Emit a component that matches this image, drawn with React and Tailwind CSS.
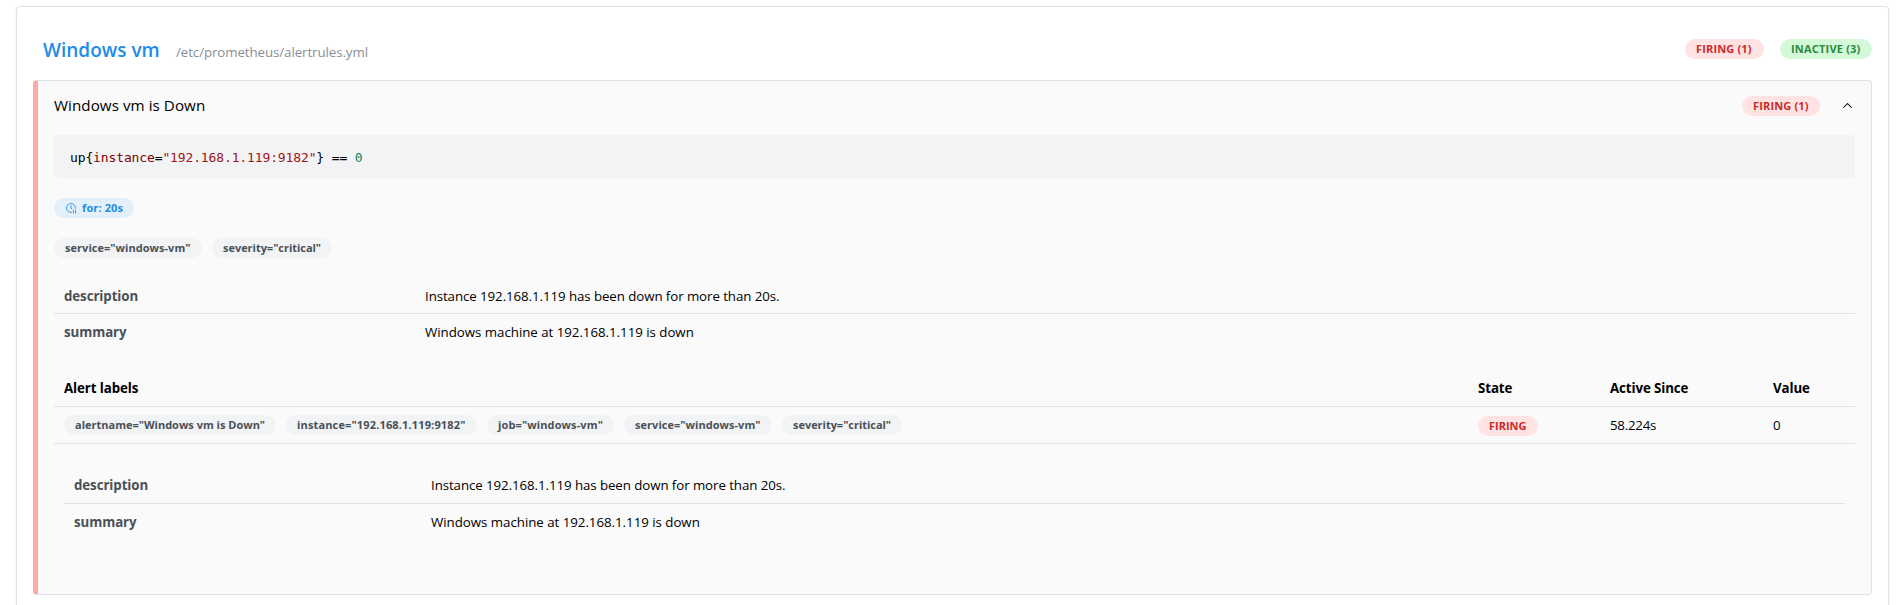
import React from "react";

const tones = {
  red: "bg-[#ffe3e3] text-[#c92a2a]",
  green: "bg-[#d3f9d8] text-[#2b8a3e]",
  blue: "bg-[#e4f0f9] text-[#228be6]",
  gray: "bg-[#f1f3f5] text-[#495057]",
};

function Badge({ tone, className, children }) {
  return (
    <span className={"flex h-5 shrink-0 items-center rounded-full pl-[11px] text-[11px] leading-5 font-bold whitespace-nowrap " + tones[tone] + " " + className}>
      {children}
    </span>
  );
}

function ClockPause() {
  return (
    <svg className="mr-[5px] size-3 opacity-85" viewBox="0 0 24 24" fill="none" stroke="currentColor" strokeWidth="2" strokeLinecap="round" strokeLinejoin="round">
      <path d="M20.942 13.018a9 9 0 1 0 -7.909 7.922" />
      <path d="M12 7v5l2 2" />
      <path d="M17 17v5" />
      <path d="M21 17v5" />
    </svg>
  );
}

function Annotations({ nested }) {
  const col = nested ? "w-[357px]" : "w-[361px]";
  const row = nested ? "h-[36px]" : "h-[35px]";
  return (
    <div className="text-[13.3px] leading-5 tracking-[-0.08px]">
      <div className={"flex items-center border-b border-[#dee2e6] box-content pl-2.5 " + row}>
        <div className={"shrink-0 font-bold text-[#495057] " + col}>description</div>
        <div>Instance 192.168.1.119 has been down for more than 20s.</div>
      </div>
      <div className={"flex items-center pl-2.5 " + row}>
        <div className={"shrink-0 font-bold text-[#495057] " + col}>summary</div>
        <div className="tracking-[-0.03px]">Windows machine at 192.168.1.119 is down</div>
      </div>
    </div>
  );
}

export default function App() {
  return (
    <div className="h-[605px] overflow-hidden bg-white pt-1.5 pr-[13px] pl-4 font-['Open_Sans','Noto_Sans',sans-serif] text-black">
      <div className="h-[640px] rounded border border-[#dee2e6] px-4 shadow-[0_1px_3px_rgba(0,0,0,0.05)]">
        <div className="flex h-[73px] items-start justify-between">
          <div className="flex items-baseline pt-[29px] pl-2.5">
            <div className="w-[133px] text-[19px] leading-7 font-semibold text-[#228be6]">Windows vm</div>
            <div className="text-[13.3px] leading-5 tracking-[-0.08px] text-[#868e96]">/etc/prometheus/alertrules.yml</div>
          </div>
          <div className="flex gap-4 pt-8">
            <Badge tone="red" className="w-[79px] tracking-[0.15px]">FIRING (1)</Badge>
            <Badge tone="green" className="w-[92px] tracking-[0.2px]">INACTIVE (3)</Badge>
          </div>
        </div>
        <div className="h-[515px] rounded border border-l-[5px] border-[#dee2e6] border-l-[#ffa8a8] bg-[#fafafa] pr-4 pl-4">
          <div className="flex h-[54px] items-start">
            <div className="flex-1 pt-3 text-[15.2px] leading-6 tracking-[0.05px]">Windows vm is Down</div>
            <Badge tone="red" className="mt-[15px] w-[78px] tracking-[0.15px]">FIRING (1)</Badge>
            <svg className="mt-[17.5px] ml-5 size-[15px]" viewBox="0 0 15 15" fill="currentColor">
              <path fillRule="evenodd" clipRule="evenodd" d="M3.135 8.842a.45.45 0 0 0 .707 0L7.5 5.136l3.658 3.706a.45.45 0 0 0 .707-.684l-4-4a.5.5 0 0 0-.73 0l-4 4a.45.45 0 0 0 0 .684Z" />
            </svg>
          </div>
          <div className="h-[43px] rounded bg-[#f1f3f5] pt-[13px] pl-4 font-['DejaVu_Sans_Mono',monospace] text-[13px] leading-5 tracking-[-0.13px] whitespace-pre">
            up{"{"}<span className="text-[#800000]">instance</span>=<span className="text-[#a31515]">"192.168.1.119:9182"</span>{"}"} == <span className="text-[#09885a]">0</span>
          </div>
          <div className="mt-5 flex">
            <Badge tone="blue" className="w-20 tracking-[0.12px]"><ClockPause />for: 20s</Badge>
          </div>
          <div className="mt-5 flex gap-2.5">
            <Badge tone="gray" className="w-[148px] tracking-[0.04px]">service="windows-vm"</Badge>
            <Badge tone="gray" className="w-[120px] tracking-[-0.03px]">severity="critical"</Badge>
          </div>
          <div className="mt-5">
            <Annotations />
          </div>
          <div className="mt-[22px] flex h-9 items-center border-b border-[#dee2e6] pb-0.5 pl-2.5 text-[13.3px] leading-5 font-bold tracking-[-0.1px]">
            <div className="w-[1414px]">Alert labels</div>
            <div className="w-[132px]">State</div>
            <div className="w-[163px]">Active Since</div>
            <div>Value</div>
          </div>
          <div className="flex h-[37px] items-center border-b border-[#dee2e6] pl-2.5 text-[13.3px] leading-5 tracking-[-0.25px]">
            <div className="flex w-[1414px] gap-2.5">
              <Badge tone="gray" className="w-[212px] tracking-[0px]">alertname="Windows vm is Down"</Badge>
              <Badge tone="gray" className="w-[191px] tracking-[0.15px]">instance="192.168.1.119:9182"</Badge>
              <Badge tone="gray" className="w-[127px] tracking-[0.12px]">job="windows-vm"</Badge>
              <Badge tone="gray" className="w-[148px] tracking-[0.04px]">service="windows-vm"</Badge>
              <Badge tone="gray" className="w-[120px] tracking-[-0.03px]">severity="critical"</Badge>
            </div>
            <div className="w-[132px] pt-0.5">
              <Badge tone="red" className="w-[60px] tracking-[0px]">FIRING</Badge>
            </div>
            <div className="w-[163px]">58.224s</div>
            <div>0</div>
          </div>
          <div className="px-2.5 pt-[23px]">
            <Annotations nested />
          </div>
        </div>
      </div>
    </div>
  );
}
